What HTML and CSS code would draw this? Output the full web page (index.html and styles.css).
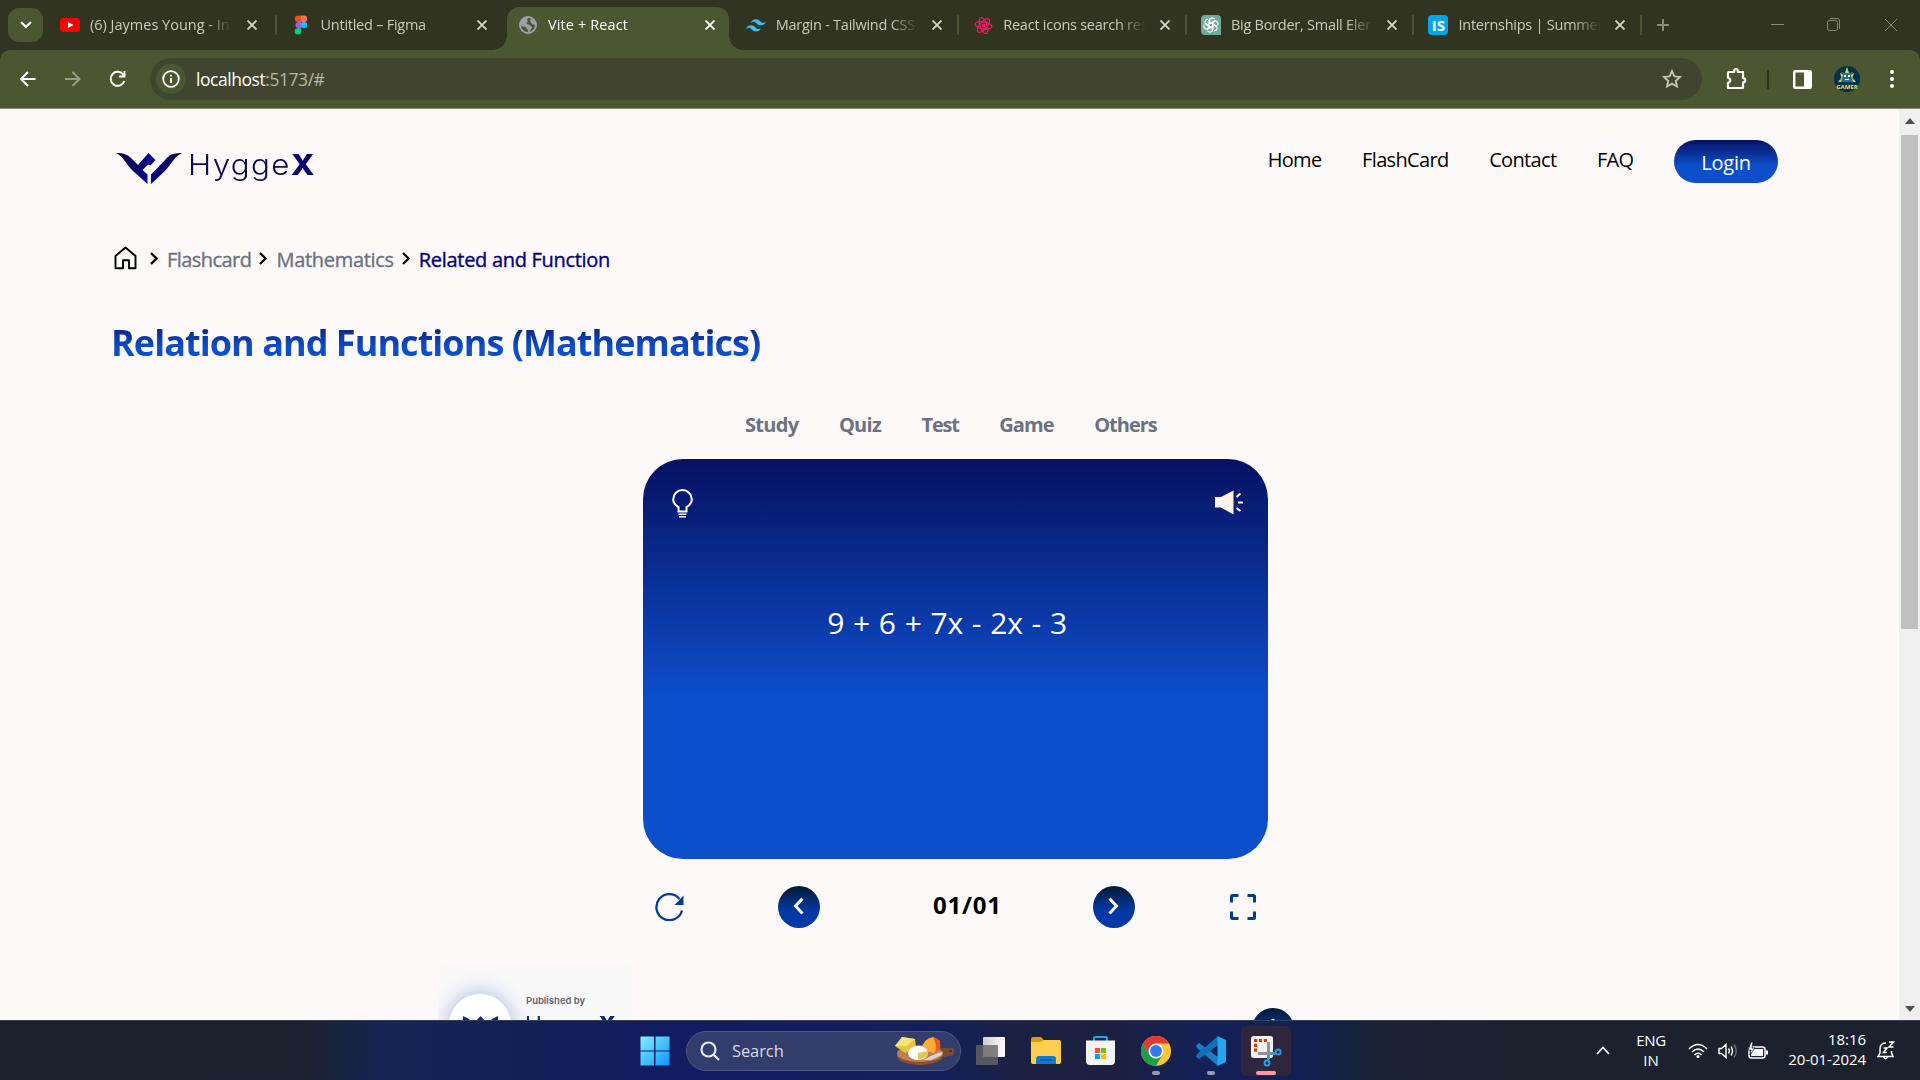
FILE: index.html
```html
<!DOCTYPE html>
<html lang="en">
<head>
<meta charset="utf-8">
<title>Vite + React</title>
<link rel="stylesheet" href="styles.css">
</head>
<body>
<header class="tabstrip">
  <button class="tab-menu"><svg width="12" height="8" viewBox="0 0 12 8"><path d="M1 1l5 5 5-5" fill="none" stroke="#fff" stroke-width="2.2"/></svg></button>
  <div class="tab first"><span class="fav"><svg width="20" height="14" viewBox="0 0 20 14"><rect width="20" height="14" rx="3" fill="#f00"/><path d="M8 4l5.500 3L8 10z" fill="#fff"/></svg></span><span class="label">(6) Jaymes Young - In</span><svg class="x" viewBox="0 0 10 10"><path d="M.5.5l9 9M9.500.5l-9 9"/></svg></div>
  <div class="tab sep"><span class="fav"><svg width="14" height="20" viewBox="0 0 14 20"><path d="M7 .5H4a3.200 3.200 0 000 6.400h3z" fill="#f24e1e"/><path d="M7 .5h3a3.200 3.200 0 010 6.400H7z" fill="#ff7262"/><path d="M7 6.900H4a3.200 3.200 0 000 6.300h3z" fill="#a259ff"/><circle cx="10" cy="10" r="3.200" fill="#1abcfe"/><path d="M7 13.200H4a3.200 3.200 0 103 3.200z" fill="#0acf83"/></svg></span><span class="label">Untitled – Figma</span><svg class="x" viewBox="0 0 10 10"><path d="M.5.5l9 9M9.500.5l-9 9"/></svg></div>
  <div class="tab active"><span class="fav"><svg width="18" height="18" viewBox="0 0 18 18"><circle cx="9" cy="9" r="8" fill="none" stroke="#9ba0a8" stroke-width="2"/><path d="M2 5.500C4 3 6.500 1.500 9.500 1.500 8 3 7.500 4 8.500 5c1 .8-1 1.500-1 2.500s2.500.3 3 1.500c.5 1.500 2 .8 2.500 2 .3 1-1 2-1.500 3-.5 1-1 2-2.500 2 .5-1.500 0-2.500-1-3s-.5-1.500-1.500-2S3 10.500 1.500 9zM12 2.500l3.500 3 1 3.500-3-.5-1.500-2-1-1.500z" fill="#9ba0a8"/></svg></span><span class="label">Vite + React</span><svg class="x" viewBox="0 0 10 10"><path d="M.5.5l9 9M9.500.5l-9 9"/></svg></div>
  <div class="tab"><span class="fav"><svg width="20" height="13" viewBox="0 0 24 15"><path d="M12 0C8.800 0 6.800 1.600 6 4.800 7.200 3.200 8.600 2.600 10.200 3c.9.200 1.600.9 2.300 1.700C13.700 5.900 15.100 7.300 18 7.300c3.200 0 5.200-1.600 6-4.800-1.200 1.600-2.600 2.200-4.200 1.800-.9-.2-1.600-.9-2.300-1.700C16.300 1.400 14.900 0 12 0zM6 7.300C2.800 7.300.8 8.900 0 12.100c1.200-1.600 2.600-2.200 4.200-1.800.9.200 1.600.9 2.300 1.700C7.700 13.200 9.100 14.600 12 14.600c3.200 0 5.200-1.600 6-4.800-1.200 1.600-2.600 2.200-4.200 1.800-.9-.2-1.600-.9-2.300-1.700C10.300 8.700 8.900 7.300 6 7.300z" fill="#38bdf8"/></svg></span><span class="label">Margin - Tailwind CSS</span><svg class="x" viewBox="0 0 10 10"><path d="M.5.5l9 9M9.500.5l-9 9"/></svg></div>
  <div class="tab sep"><span class="fav"><svg width="19" height="21" viewBox="0 0 20 20" fill="none" stroke="#e91e63" stroke-width="1.300"><ellipse cx="10" cy="10" rx="9" ry="3.700" transform="rotate(10 10 10)"/><ellipse cx="10" cy="10" rx="9" ry="3.700" transform="rotate(70 10 10)"/><ellipse cx="10" cy="10" rx="9" ry="3.700" transform="rotate(130 10 10)"/><circle cx="10" cy="10" r="1.400" fill="#e91e63"/></svg></span><span class="label">React icons search res</span><svg class="x" viewBox="0 0 10 10"><path d="M.5.5l9 9M9.500.5l-9 9"/></svg></div>
  <div class="tab sep"><span class="fav"><svg width="20" height="20" viewBox="0 0 20 20"><path d="M4 0h12a4 4 0 014 4v16H4a4 4 0 01-4-4V4a4 4 0 014-4z" fill="#74aa9c"/><g fill="none" stroke="#fff" stroke-width="1.100"><path d="M8 12.500V5.500a3 3 0 015.500-1.200M10 8.500L14.500 6"/><path d="M8 12.500V5.500a3 3 0 015.500-1.200M10 8.500L14.500 6" transform="rotate(60 10 10)"/><path d="M8 12.500V5.500a3 3 0 015.500-1.200M10 8.500L14.500 6" transform="rotate(120 10 10)"/><path d="M8 12.500V5.500a3 3 0 015.500-1.200M10 8.500L14.500 6" transform="rotate(180 10 10)"/><path d="M8 12.500V5.500a3 3 0 015.500-1.200M10 8.500L14.500 6" transform="rotate(240 10 10)"/><path d="M8 12.500V5.500a3 3 0 015.500-1.200M10 8.500L14.500 6" transform="rotate(300 10 10)"/></g></svg></span><span class="label">Big Border, Small Eler</span><svg class="x" viewBox="0 0 10 10"><path d="M.5.5l9 9M9.500.5l-9 9"/></svg></div>
  <div class="tab sep last"><span class="fav is">IS</span><span class="label">Internships | Summer</span><svg class="x" viewBox="0 0 10 10"><path d="M.5.5l9 9M9.500.5l-9 9"/></svg></div>
  <svg class="newtab" width="14" height="14" viewBox="0 0 14 14"><path d="M7 1v12M1 7h12" stroke="#878b78" stroke-width="2"/></svg>
  <svg class="winctl" width="130" height="16" viewBox="0 0 130 16" fill="none" stroke="#888b7e"><path d="M1 7.500h13M115 2l12 12M127 2l-12 12"/><rect x="57.500" y="3.500" width="10" height="10" rx="2"/><path d="M60 1.500h7a2.500 2.500 0 012.500 2.500v8"/></svg>
</header>
<div class="toolbar-back">
<div class="toolbar">
  <svg width="112" height="22" viewBox="0 0 112 22" fill="none" stroke="#fff" stroke-width="2"><path d="M17.500 11H3.500M10 4L3 11l7 7"/><path d="M47 11h14M54.500 4l7 7-7 7" stroke="#989c88"/><path d="M105.500 7a7 7 0 10.800 6M106.500 3v5.500H101"/></svg>
  <div class="omnibox">
    <span class="info"><svg width="18" height="18" viewBox="0 0 18 18"><circle cx="9" cy="9" r="7.800" fill="none" stroke="#fff" stroke-width="1.800"/><path d="M9 8v5M9 4.800v1.800" stroke="#fff" stroke-width="1.800"/></svg></span>
    <span class="url"><b>localhost</b>:5173/#</span>
    <svg class="star" width="20" height="20" viewBox="0 0 20 20"><path d="M10 2l2.400 5.300 5.700.6-4.300 3.900 1.200 5.700L10 14.600l-5 2.900 1.200-5.700L1.900 7.900l5.700-.6z" fill="none" stroke="#c5c6c0" stroke-width="1.800"/></svg>
  </div>
  <svg class="puzzle" width="23" height="24" viewBox="0 0 23 24"><path d="M4 5h5c0-4 4-4 4 0h5v6c3 .500 3 4 0 4.500V21H3v-5.200c3-.8 3-4.200 0-5V6a1 1 0 011-1z" fill="none" stroke="#fff" stroke-width="2.200" stroke-linejoin="round"/></svg>
  <i class="tdiv"></i>
  <svg class="panel" width="19" height="19" viewBox="0 0 19 19"><rect x="1.200" y="1.200" width="16.600" height="16.600" rx="1" fill="none" stroke="#fff" stroke-width="2.400"/><path d="M11 1h7v17h-7z" fill="#fff"/></svg>
  <span class="avatar"><svg width="26" height="26" viewBox="0 0 26 26"><circle cx="13" cy="13" r="13" fill="#08304a"/><path d="M13 2l2 5 4-1-1 4 4 6H4l4-6-1-4 4 1z" fill="#2c7187"/><path d="M13 1l2 6h-4zM6 7l3 2-1 4zM20 7l-3 2 1 4zM4 16l4-4-1 4zM22 16l-4-4 1 4z" fill="#d8dd49"/><path d="M10 9h2v2h-2zM14 9h2v2h-2zM11 13h4v1h-4z" fill="#dff"/><text x="13" y="22.500" text-anchor="middle" class="gamer">GAMER</text></svg></span>
  <svg class="dots" width="4" height="20" viewBox="0 0 4 20" fill="#fff"><circle cx="2" cy="3" r="2"/><circle cx="2" cy="10" r="2"/><circle cx="2" cy="17" r="2"/></svg>
</div>
</div>
<div class="viewport">
<main class="page">
  <div class="topbar">
    <div class="logo">
      <svg width="66" height="32" viewBox="0 0 66 32"><defs><linearGradient id="lg" x1="0" x2="1"><stop offset="0" stop-color="#03033c"/><stop offset=".5" stop-color="#08088a"/><stop offset="1" stop-color="#05054e"/></linearGradient></defs><path d="M0 0c8 0 12 2 15 5l7 7L32.500 0l7 7-5 5.500-2.500-1-5.500 5.500 5 4.500v9.500L17 18C9 10 8 4 0 0zM66 0c-9 0-13 2-16 6L35 21.500v9.500L49 18C57 9 58 4 66 0z" fill="url(#lg)"/></svg>
      <span class="wordmark">Hygge<b>X</b></span>
    </div>
    <nav class="nav"><a>Home</a><a>FlashCard</a><a>Contact</a><a>FAQ</a><a class="login">Login</a></nav>
  </div>
  <div class="crumbs">
    <svg class="home" width="24" height="24" viewBox="0 0 24 24"><path d="M2.500 10L12.500 1.500 22.500 10v12.200H16v-8h-6v8H2.500z" fill="none" stroke="#000" stroke-width="1.900" stroke-linejoin="round"/></svg>
    <svg class="chev c1" width="8" height="13" viewBox="0 0 8 13"><path d="M1 1l5.500 5.500L1 12"/></svg><a class="b1">Flashcard</a>
    <svg class="chev c2" width="8" height="13" viewBox="0 0 8 13"><path d="M1 1l5.500 5.500L1 12"/></svg><a class="b2">Mathematics</a>
    <svg class="chev c2" width="8" height="13" viewBox="0 0 8 13"><path d="M1 1l5.500 5.500L1 12"/></svg><a class="b3">Related and Function</a>
  </div>
  <h1><span>Relation and Functions (Mathematics)</span></h1>
  <section class="study">
    <div class="modes"><a>Study</a><a>Quiz</a><a class="m3">Test</a><a class="m4">Game</a><a class="m5">Others</a></div>
    <div class="card">
      <div class="card-icons">
        <svg width="21" height="29" viewBox="0 0 21 29" fill="none" stroke="#fff" stroke-width="2"><path d="M6.500 22.500v-4.300C3 16 1.200 13.500 1.200 10.500a9.300 9.500 0 0118.600 0c0 3-1.800 5.500-5.300 7.700v4.300z"/><path d="M6.500 25.200h8M7 27.800h7" stroke-width="1.500"/></svg>
        <svg class="speaker" width="28" height="25" viewBox="0 0 28 25"><path d="M0 7h6L18.500.5v24L6 17.500H0z" fill="#fff3ee"/><path d="M21.500 7l4-3.500M23 12.500h5M21.500 18l4 3" stroke="#fff3ee" stroke-width="1.900"/></svg>
      </div>
      <div class="formula">9 + 6 + 7x - 2x - 3</div>
    </div>
    <div class="controls">
      <svg class="refresh" width="30" height="28" viewBox="0 0 30 28"><path d="M28 17.500A13 13 0 1125.500 6" fill="none" stroke="#0439a5" stroke-width="2.300"/><path d="M29.500 2.500v9.500h-9z" fill="#0439a5"/></svg>
      <span class="round"><svg width="11" height="18" viewBox="0 0 11 18"><path d="M9.500 1.500L2.500 9l7 7.500"/></svg></span>
      <span class="count">01/01</span>
      <span class="round"><svg width="11" height="18" viewBox="0 0 11 18"><path d="M1.500 1.500L8.500 9l-7 7.500"/></svg></span>
      <svg class="full" width="26" height="26" viewBox="0 0 26 26" fill="none" stroke="#0439a5" stroke-width="3"><path d="M1.500 8.500v-6q0-1 1-1h6M17.500 1.500h6q1 0 1 1v6M24.500 17.500v6q0 1-1 1h-6M8.500 24.500h-6q-1 0-1-1v-6"/></svg>
    </div>
  </section>
  <div class="bottom">
    <div class="publisher">
      <div class="badge"><svg width="35" height="20" viewBox="0 0 35 20"><path d="M0 0l6 3 4 5 7.500-8 7.500 8 4-5 6-3v5L22 18h-9L0 5z" fill="#0b2a70"/></svg></div>
      <div class="pub-text"><small>Published by</small><span>Hygge<b>X</b></span></div>
    </div>
    <span class="round plus"><svg width="20" height="20" viewBox="0 0 20 20"><path d="M10 0v20M0 10h20"/></svg></span>
  </div>
</main>
<div class="scrollbar"><svg width="10" height="6" viewBox="0 0 10 6"><path d="M0 6l5-6 5 6z" fill="#505050"/></svg><i></i><svg width="10" height="6" viewBox="0 0 10 6"><path d="M0 0h10L5 6z" fill="#505050"/></svg></div>
</div>
<footer class="taskbar">
  <div class="launch">
    <svg class="win" width="30" height="30" viewBox="0 0 30 30"><defs><linearGradient id="w" x1="0" y1="0" x2="1" y2="1"><stop offset="0" stop-color="#80f2ff"/><stop offset="1" stop-color="#0c93fb"/></linearGradient></defs><path d="M1 .5h13v14H.5V1zM15.500.5h14v14h-14zM.5 15.500h13.500v14H.5zM15.500 15.500h14v14h-14z" fill="url(#w)"/></svg>
    <div class="search">
      <svg width="20" height="20" viewBox="0 0 20 20" fill="none" stroke="#e6e8f2" stroke-width="2.200"><circle cx="8.500" cy="8.500" r="7"/><path d="M13.500 13.500l5.500 5.500"/></svg>
      <span class="search-text">Search</span>
      <svg class="cheese" width="60" height="30" viewBox="0 0 60 30"><ellipse cx="25" cy="20" rx="23" ry="9" fill="#8b4f30"/><path d="M40 12l18 0q3 3 0 7l-14 3z" fill="#7b4a32"/><ellipse cx="25" cy="17.500" rx="23" ry="8.500" fill="#b98250"/><circle cx="55.500" cy="15" r="1.300" fill="#3b2c3a"/><path d="M0 10L7 1l13 2 1 9-11 5z" fill="#e9c53e"/><path d="M0 10L7 1l13 2-9 7z" fill="#f8e27a"/><path d="M26 14q3-12 12-13l7 4-6 12z" fill="#ffab38"/><path d="M38 1q9 2 7 12l-4 2q1-6-3-14z" fill="#ee5a20"/><ellipse cx="23" cy="17" rx="10" ry="7" fill="#fff"/><path d="M23 17l10-2v5l-10 4z" fill="#e8c457"/><path d="M28 24l10-5 8-3q3 1-1 4l-9 4z" fill="#d9d4d0"/></svg>
    </div>
    <svg class="app tv" width="29" height="28" viewBox="0 0 29 28"><defs><linearGradient id="v"><stop offset="0" stop-color="#ccc"/><stop offset="1" stop-color="#fff"/></linearGradient></defs><rect x="7" width="22" height="20" rx="1" fill="url(#v)"/><rect y="8" width="22" height="20" rx="1" fill="#666" opacity=".8"/></svg>
    <svg class="app folder" width="30" height="27" viewBox="0 0 30 27"><path d="M0 2q0-2 2-2h8l3 3h8v8H0z" fill="#dc9a0a"/><path d="M0 5h10l3-2h15q2 0 2 2v20q0 2-2 2H2q-2 0-2-2z" fill="#ffce4c"/><path d="M5 27v-5q0-3 3-3h14q3 0 3 3v5z" fill="#107bd2"/><path d="M9 23h12" stroke="#07539a" stroke-width="1.200"/></svg>
    <svg class="app" width="29" height="29" viewBox="0 0 29 29"><path d="M8 6V1.500q0-.5.500-.5h12q.5 0 .5.500V6" fill="none" stroke="#1ca6e8" stroke-width="2"/><path d="M0 4.500h29V25q0 4-4 4H4q-4 0-4-4z" fill="#f3f3f3"/><path d="M9 12h5v5H9z" fill="#f25022"/><path d="M15 12h5v5h-5z" fill="#7fba00"/><path d="M9 18h5v5H9z" fill="#00a4ef"/><path d="M15 18h5v5h-5z" fill="#ffb900"/></svg>
    <span class="app run chrome"><svg width="30" height="30" viewBox="0 0 30 30"><circle cx="15" cy="15" r="15" fill="#fcc934"/><path d="M15 7.500H28A15 15 0 002 7.500l6.500 11.300z" fill="#e33b2e"/><path d="M2 7.500a15 15 0 0013 22.500l6.500-11.200H8.500z" fill="#1e9e4a"/><circle cx="15" cy="15" r="7.500" fill="#fff"/><circle cx="15" cy="15" r="5.900" fill="#2f7ded"/></svg></span>
    <span class="app run"><svg width="30" height="30" viewBox="0 0 30 30"><path d="M0 9.500L3 7l19 14v9L1 12z" fill="#187fc4"/><path d="M0 20.500L3 23 22 9V0L1 18z" fill="#0e70b8"/><path d="M21.500 0L30 4v22l-8.500 4z" fill="#27a5ee"/></svg></span>
    <span class="app run snip"><svg width="32" height="32" viewBox="0 0 32 32"><rect x="1" y="1" width="22" height="22" rx="2.500" fill="#f2f2f2"/><path d="M17 5.500H5.500V18" fill="none" stroke="#d83b01" stroke-width="3" stroke-dasharray="3.200 1.700"/><path d="M18.500 7v17M8 18.500h17" stroke="#8d949b" stroke-width="3"/><circle cx="28" cy="17" r="2.500" fill="none" stroke="#2b9be6" stroke-width="2"/><circle cx="17" cy="28" r="2.500" fill="none" stroke="#2b9be6" stroke-width="2"/><path d="M20 19l6-1M18 20v6" stroke="#2b9be6" stroke-width="2"/></svg></span>
  </div>
  <div class="tray">
    <svg class="up" width="14" height="9" viewBox="0 0 14 9"><path d="M1 8l6-6.500L13 8" fill="none" stroke="#fff" stroke-width="1.800"/></svg>
    <span class="lang"><span class="g1">ENG</span><span>IN</span></span>
    <svg class="wifi" width="20" height="16" viewBox="0 0 20 16" fill="none" stroke="#fff" stroke-width="1.600"><path d="M1 6q9-9 18 0M4 9q6-6 12 0M6.500 12q3.500-3.500 7 0"/><circle cx="10" cy="13.500" r="1.500" fill="#fff" stroke="none"/></svg>
    <svg class="vol" width="20" height="16" viewBox="0 0 20 16" fill="none" stroke="#fff" stroke-width="1.400"><path d="M1 5.500h2.500L8 1.500v13l-4.500-4H1zM10.500 5.500q1.800 2.500 0 5M13 3.500q3 4.500 0 9"/><path d="M16 1.500q4.500 6.500 0 13" stroke="#656b76"/></svg>
    <svg class="bat" width="20" height="18" viewBox="0 0 20 18"><rect x="1" y="5" width="16" height="11" rx="2.500" fill="none" stroke="#fff" stroke-width="1.500"/><path d="M5 7h10v7H3v-3zM18 8.500h2v4h-2z" fill="#fff"/><path d="M3 0L0 8h3l-1 5 5-7H4l1-6z" fill="#fff" stroke="#1b222c" stroke-width=".8"/></svg>
    <span class="clock"><span>18:16</span><span>20-01-2024</span></span>
    <svg class="bell" width="18" height="19" viewBox="0 0 18 19" fill="none" stroke="#fff" stroke-width="1.500"><path d="M9 2Q3 2 3 8v4l-2 3.500h15L14.500 12v-2M6.500 16q2 3.500 4 0M6.500 7h3.500l-3.500 4.500H10M12 1h4.500L12 6h4.500"/></svg>
  </div>
</footer>
</body>
</html>
```
FILE: styles.css
```css
* { box-sizing: border-box; }
body { margin: 0; width: 1920px; height: 1080px; overflow: hidden; display: flex; flex-direction: column; background: #fdf9f8; font-family: "Open Sans", "Noto Sans", sans-serif; color: #000; }
svg { display: block; flex: none; }
span, a { white-space: nowrap; }

.tabstrip { height: 50px; background: #303420; display: flex; align-items: flex-start; padding-left: 8px; flex: none; }
.tab-menu { width: 35px; height: 34px; margin: 8px 5px 0 0; padding: 0; border: 0; border-radius: 11px; background: #4c5631; display: grid; place-items: center; }
.tab { width: 227.600px; height: 50px; padding: 0 20px 0 11px; display: flex; align-items: center; position: relative; color: #c9cbc0; }
.tab.first { width: 231.500px; padding: 0 23px 0 12px; }
.tab.sep::before { content: ""; position: absolute; left: -5px; top: 15px; width: 2px; height: 20px; background: #4c5631; border-radius: 1px; }
.tab.last::after { content: ""; position: absolute; right: 3px; top: 15px; width: 2px; height: 20px; background: #4c5631; }
.fav { width: 20px; display: grid; place-items: center; flex: none; }
.fav.is { height: 20px; border-radius: 4px; background: #00a5ec; color: #fff; font: 700 15px/20px "Open Sans", sans-serif; }
.label { width: 145px; margin-left: 10px; font-size: 14.500px; letter-spacing: -.25px; line-height: 24px; -webkit-mask-image: linear-gradient(90deg, #000 115px, transparent 143px); mask-image: linear-gradient(90deg, #000 115px, transparent 143px); }
.tab.first .label { letter-spacing: 0; }
.x { width: 10px; height: 10px; margin-left: auto; fill: none; stroke: #d5d7cc; stroke-width: 1.800; }
.active { color: #fff; }
.active .label { letter-spacing: .1px; }
.active > * { z-index: 1; }
.active .x { stroke: #fff; }
.active::before { content: ""; position: absolute; inset: 7px 6px 0 0; background: #4c5631; border-radius: 12px 12px 0 0; }
.active::after { content: ""; position: absolute; left: -14px; right: -8px; bottom: 0; height: 14px; background: radial-gradient(circle at 0 0, transparent 13.500px, #4c5631 14px) left / 14px 14px no-repeat, radial-gradient(circle at 100% 0, transparent 13.500px, #4c5631 14px) right / 14px 14px no-repeat; }
.newtab { margin: 18px 0 0 11px; }
.winctl { margin: 17px 20px 0 auto; }

.toolbar-back { background: #303420; height: 59px; flex: none; }
.toolbar { height: 59px; background: #4c5631; border-radius: 10px 10px 0 0; border-bottom: 1px solid #8a8c74; display: flex; align-items: center; padding-left: 18px; }
.omnibox { width: 1552px; height: 42px; margin-left: 20px; padding: 0 20px 0 6px; border-radius: 21px; background: #41452f; display: flex; align-items: center; }
.info { width: 30px; height: 30px; border-radius: 50%; background: #4c5631; display: grid; place-items: center; }
.url { margin-left: 10px; font-size: 17.500px; letter-spacing: -.45px; color: #b5b8aa; }
.url b { font-weight: 400; color: #fff; }
.star { margin-left: auto; }
.puzzle { margin-left: 23px; }
.tdiv { width: 2px; height: 19px; margin-left: 19px; background: #303420; }
.panel { margin-left: 24px; }
.avatar { margin-left: 22px; }
.gamer { font: 700 6px "Open Sans", sans-serif; fill: #e6e83c; }
.dots { margin-left: 30px; }

.viewport { height: 911px; display: flex; flex: none; }
.page { width: 1899px; overflow: hidden; }
.scrollbar { width: 21px; background: #f0f0f0; display: flex; flex-direction: column; align-items: center; padding: 9px 0 8px; }
.scrollbar i { width: 17px; height: 494px; margin: 11px 0 auto; background: #c1c1c1; }

.topbar { height: 106px; padding: 31px 121px 0 116px; display: flex; justify-content: space-between; align-items: flex-start; }
.logo { display: flex; padding-top: 13px; }
.wordmark { margin: -6px 0 0 6px; font: 300 28.500px/36px Inter, sans-serif; letter-spacing: 1.200px; color: #0a0a50; transform: scaleX(1.1); transform-origin: left; }
.wordmark b { font-weight: 800; color: #07076c; }
.nav { display: flex; gap: 40.500px; font-size: 20px; letter-spacing: -.65px; line-height: 40px; }
.login { width: 104px; height: 43px; border-radius: 22px; background: linear-gradient(#061161, #0d4ecb 60%); color: #fff; text-align: center; line-height: 46px; letter-spacing: -.2px; }
.crumbs { height: 64px; padding: 31px 0 0 113px; display: flex; font-size: 20px; line-height: 28px; color: #6b7280; -webkit-text-stroke: .35px; letter-spacing: -.3px; }
.chev { fill: none; stroke: #000; stroke-width: 2.300; margin-top: 6px; }
.c1 { margin-left: 13px; }
.c2 { margin-left: 4px; }
.crumbs a { margin: 0 4px 0 9px; }
.crumbs .b1 { letter-spacing: -.55px; }
.crumbs .b3 { color: #000080; }
h1 { margin: 39px 0 0 111px; font-size: 36px; line-height: 50px; font-weight: 700; letter-spacing: -.95px; }
h1 span { background: linear-gradient(#061161, #0d4ecb 60%); -webkit-background-clip: text; background-clip: text; color: transparent; }
.study { width: 625px; margin-left: 643px; }
.modes { height: 91px; padding: 43px 0 0 102px; display: flex; gap: 40.500px; font-size: 20px; line-height: 28px; font-weight: 700; letter-spacing: -.7px; color: #6b7280; }
.modes .m3 { letter-spacing: -1.200px; }
.modes .m4 { letter-spacing: -.9px; }
.modes .m5 { letter-spacing: -1px; }
.card { height: 400px; border-radius: 40px; background: linear-gradient(#061161, #0d4ecb 60%); padding: 30px 25px 0 29px; }
.card-icons { display: flex; justify-content: space-between; height: 94px; }
.speaker { margin-top: 1px; }
.formula { text-align: center; color: #fff; font-size: 30px; line-height: 80px; letter-spacing: -.2px; word-spacing: 1.300px; padding-right: 21px; }
.controls { display: flex; align-items: center; height: 96px; padding-left: 11px; }
.round { width: 42px; height: 42px; border-radius: 50%; background: linear-gradient(#001b33, #0439a5 60%); display: grid; place-items: center; flex: none; }
.round path { fill: none; stroke: #fff; stroke-width: 3; }
.controls .round svg { margin: -2px 2px 0 0; }
.refresh { margin-right: 94px; }
.count { width: 67px; margin: -6px 93px 0 113px; font-size: 24px; font-weight: 700; letter-spacing: .8px; }
.full { margin-left: 95px; }
.bottom { display: flex; align-items: flex-start; height: 65px; overflow: hidden; padding-left: 438px; }
.publisher { width: 194px; height: 80px; margin-top: 10px; background: #f9f9f9; display: flex; padding: 29px 0 0 11px; overflow: hidden; }
.badge { width: 62px; height: 62px; border-radius: 50%; background: #fff; box-shadow: 0 0 20px 2px #b2bfe5; padding: 22px 0 0 14px; }
.pub-text { margin-left: 15px; display: flex; flex-direction: column; font-family: Inter, sans-serif; }
.pub-text small { font-size: 9.500px; line-height: 13px; font-weight: 600; color: #62626c; }
.pub-text span { font: 400 21px/26px Inter, sans-serif; letter-spacing: .6px; color: #062a70; margin: 5px 0 0 -1px; transform: scaleX(1.08); transform-origin: left; }
.pub-text b { font-weight: 800; }
.plus { margin: 53px 0 0 620px; }

.taskbar { height: 60px; flex: none; border-top: 1px solid #3a4053; background: linear-gradient(90deg, #1b222d 0, #1b222f 16%, #142555 20%, #112058 28%, #141b62 35%, #14205a 49%, #1c2042 53%, #1c2040 58%, #14215a 63%, #102050 68%, #1a2235 72%, #1b222d 80%); display: flex; align-items: center; color: #fff; }
.launch { display: flex; align-items: center; margin-left: 640px; }
.search { width: 275px; height: 40px; margin-left: 16px; padding: 0 5px 0 13px; border: 1px solid #4d5781; border-radius: 20px; background: #333d6b; display: flex; align-items: center; }
.search-text { margin-left: 12px; font-size: 16.500px; letter-spacing: -.1px; color: #d8dae6; }
.cheese { margin-left: auto; }
.app { margin-left: 25px; }
.tv { margin-left: 15px; }
.folder, .chrome { margin-left: 26px; }
.run { display: flex; height: 50px; padding-top: 10px; position: relative; }
.run::after { content: ""; position: absolute; left: 11px; bottom: 1px; width: 8px; height: 4px; border-radius: 2px; background: #969bb0; }
.snip { width: 50px; margin-left: 15px; padding: 9px; border-radius: 5px; background: #2f263e; }
.snip::after { left: 15px; width: 20px; background: #ff99a4; }
.tray { margin-left: auto; display: flex; align-items: center; font-size: 15px; line-height: 20px; padding-right: 25px; }
.lang { width: 30px; margin: -2px 22px 0 26px; display: flex; flex-direction: column; align-items: center; }
.g1 { letter-spacing: -.4px; }
.vol { margin-left: 10px; }
.bat { margin-left: 10px; }
.clock { width: 79px; margin: -3px 11px 0 19px; display: flex; flex-direction: column; align-items: flex-end; letter-spacing: -.05px; }
```
